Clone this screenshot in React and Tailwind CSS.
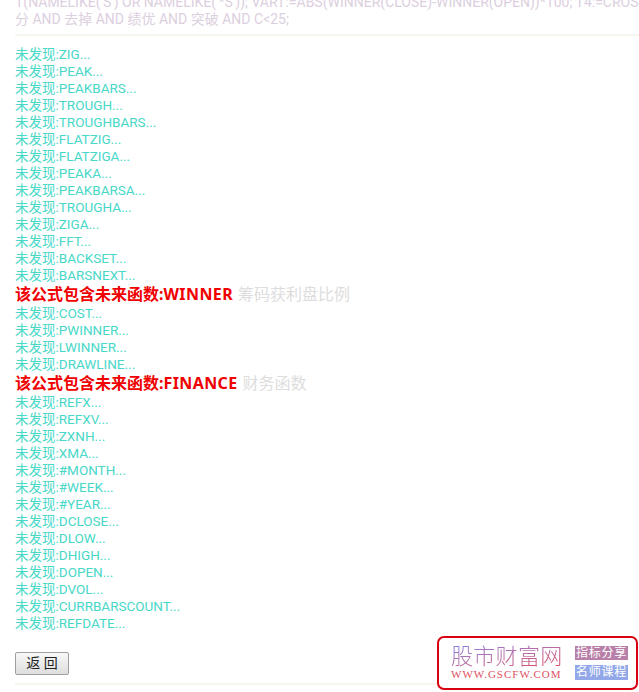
const groups = [
  ['ZIG', 'PEAK', 'PEAKBARS', 'TROUGH', 'TROUGHBARS', 'FLATZIG', 'FLATZIGA', 'PEAKA', 'PEAKBARSA', 'TROUGHA', 'ZIGA', 'FFT', 'BACKSET', 'BARSNEXT'],
  ['COST', 'PWINNER', 'LWINNER', 'DRAWLINE'],
  ['REFX', 'REFXV', 'ZXNH', 'XMA', '#MONTH', '#WEEK', '#YEAR', 'DCLOSE', 'DLOW', 'DHIGH', 'DOPEN', 'DVOL', 'CURRBARSCOUNT', 'REFDATE'],
];

function Missing({ name }) {
  return <div className="h-[17px] leading-[17px] text-[13.5px] text-[#48d8c8]">未发现:{name}...</div>;
}

function Warning({ name, note }) {
  return (
    <div className="h-[21px] leading-[21px] text-[16px]">
      <span className="font-bold text-[#f00000] font-['Noto_Sans','Noto_Sans_CJK_SC',sans-serif]">
        该公式包含未来函数:<span className="tracking-[0.4px]">{name}</span>
      </span>
      <span className="ml-[1px] text-[#dddddd]"> {note}</span>
    </div>
  );
}

export default function App() {
  return (
    <div className="relative w-[639px] h-[692px] overflow-hidden bg-white whitespace-nowrap font-['Roboto','Noto_Sans_CJK_SC',sans-serif]">
      <div className="pl-[15px] -mt-[6px] text-[14px] leading-[17px] text-[#dccfe0]">
        <div>T(NAMELIKE('S') OR NAMELIKE('*S')); VART:=ABS(WINNER(CLOSE)-WINNER(OPEN))*100; T4:=CROSS</div>
        <div>分 AND 去掉 AND 绩优 AND 突破 AND C&lt;25;</div>
      </div>
      <div className="ml-[15px] mt-[6px] h-[2px] bg-[#f8f5ee]" />
      <div className="pl-[15px] mt-[10px]">
        {groups[0].map((n) => <Missing key={n} name={n} />)}
        <Warning name="WINNER" note="筹码获利盘比例" />
        {groups[1].map((n) => <Missing key={n} name={n} />)}
        <Warning name="FINANCE" note="财务函数" />
        {groups[2].map((n) => <Missing key={n} name={n} />)}
      </div>
      <div className="pl-[15px] mt-[19px]">
        <button className="w-[54px] h-[23px] rounded-[2px] border border-[#a0a0a0] bg-gradient-to-b from-[#f8f8f8] to-[#dedede] text-[14px] leading-[20px] text-[#222222]">返 回</button>
      </div>
      <div className="ml-[15px] mt-[8px] h-[2px] bg-[#f8f5ee]" />

      {/* site badge in the corner */}
      <div className="absolute left-[437px] top-[636px] w-[201px] h-[54px] rounded-[7px] border-2 border-[#d8000f] bg-white flex items-center pl-[12px] pr-[8px]">
        <div className="w-[122px]">
          <div className="text-[22px] leading-[23px] font-light tracking-[0.3px] text-transparent bg-clip-text bg-gradient-to-br from-[#8a7fe0] to-[#e0405a]">股市财富网</div>
          <div className="text-[11px] leading-[13px] tracking-[1px] text-[#e0505f] font-['Liberation_Serif',serif]">WWW.GSCFW.COM</div>
        </div>
        <div className="ml-auto flex flex-col gap-[5px]">
          <div className="w-[53px] h-[14px] leading-[14px] text-center text-[12px] tracking-[0.8px] text-white bg-[#b87fa8]">指标分享</div>
          <div className="w-[53px] h-[15px] leading-[15px] text-center text-[12px] tracking-[0.8px] text-white bg-[#92a8e8]">名师课程</div>
        </div>
      </div>
    </div>
  );
}
